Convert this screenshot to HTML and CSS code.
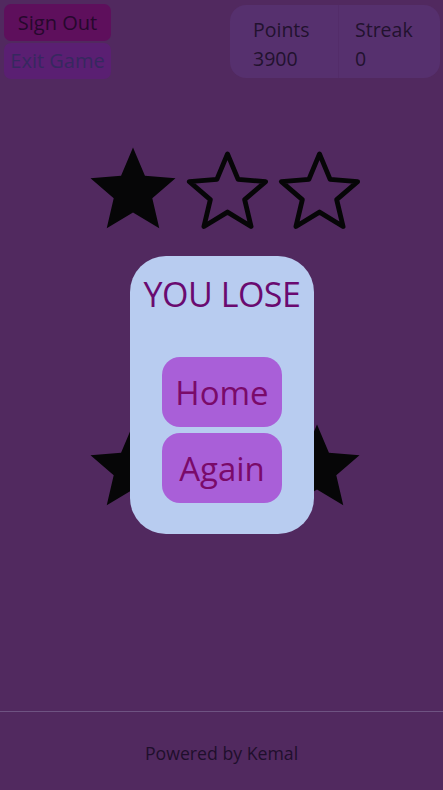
FILE: index.html
```html
<!DOCTYPE html>
<html>
<head>
<meta charset="utf-8">
<link rel="stylesheet" href="styles.css">
</head>
<body>
<div class="page">
  <header class="top">
    <div class="nav">
      <button class="btn signout">Sign Out</button>
      <button class="btn exit">Exit Game</button>
    </div>
    <div class="stats">
      <div class="stat">
        <div>Points</div>
        <div>3900</div>
      </div>
      <div class="stat">
        <div>Streak</div>
        <div>0</div>
      </div>
    </div>
  </header>
  <main class="game">
    <div class="stars row1">
      <svg class="star solid" viewBox="0 0 24 24"><path class="fill" d="M12 17.27L18.18 21l-1.64-7.03L22 9.24l-7.19-.61L12 2 9.19 8.630 2 9.24l5.46 4.73L5.82 21z"/></svg>
      <svg class="star hollow" viewBox="0 0 24 24"><path class="outline" d="M12 2.3 14.74 8.88 21.84 9.45 16.43 14.09 18.08 21.02 12 17.31 5.92 21.02 7.57 14.09 2.16 9.45 9.26 8.88z"/></svg>
      <svg class="star hollow" viewBox="0 0 24 24"><path class="outline" d="M12 2.3 14.74 8.88 21.84 9.45 16.43 14.09 18.08 21.02 12 17.31 5.92 21.02 7.57 14.09 2.16 9.45 9.26 8.88z"/></svg>
    </div>
    <div class="stars row2">
      <svg class="star solid" viewBox="0 0 24 24"><path class="fill" d="M12 17.27L18.18 21l-1.64-7.03L22 9.24l-7.19-.61L12 2 9.19 8.63 2 9.24l5.46 4.73L5.82 21z"/></svg>
      <svg class="star solid" viewBox="0 0 24 24"><path class="fill" d="M12 17.27L18.18 21l-1.64-7.03L22 9.24l-7.19-.61L12 2 9.19 8.63 2 9.24l5.46 4.73L5.82 21z"/></svg>
      <svg class="star solid" viewBox="0 0 24 24"><path class="fill" d="M12 17.27L18.18 21l-1.64-7.03L22 9.24l-7.19-.61L12 2 9.19 8.63 2 9.24l5.46 4.73L5.82 21z"/></svg>
    </div>
    <div class="modal">
      <h1 class="title">YOU LOSE</h1>
      <div class="actions">
        <button class="mbtn">Home</button>
        <button class="mbtn">Again</button>
      </div>
    </div>
  </main>
  <footer class="footer">Powered by Kemal</footer>
</div>
</body>
</html>
```
FILE: styles.css
```css
* { box-sizing: border-box; }
html, body { margin: 0; padding: 0; }
body {
  background: #51295f;
  font-family: "Open Sans", "Noto Sans", sans-serif;
  width: 443px;
  height: 790px;
  overflow: hidden;
}
.page {
  height: 790px;
  display: flex;
  flex-direction: column;
}
.top {
  display: flex;
  justify-content: space-between;
  align-items: flex-start;
  padding: 4px 3px 0 4px;
}
.nav {
  display: flex;
  flex-direction: column;
  gap: 2px;
}
.btn {
  width: 107px;
  height: 37px;
  border: none;
  border-radius: 7px;
  font-family: inherit;
  font-size: 20px;
  padding: 0;
  line-height: 37px;
}
.signout { background: #5e0f5c; color: #26082d; }
.exit { background: #5a1f72; color: #36285f; height: 36px; line-height: 36px; }
.stats {
  margin-top: 1px;
  width: 210px;
  height: 73px;
  background: #56306e;
  border-radius: 16px;
  display: flex;
}
.stat {
  flex: 1;
  padding: 10px 0 0 23px;
  font-size: 19.5px;
  line-height: 29px;
  color: #22122e;
}
.stat + .stat { border-left: 1px solid #532c69; padding-left: 16px; }
.game {
  position: relative;
  flex: 1;
}
.stars {
  display: flex;
  align-items: flex-start;
  padding-left: 82px;
}
.row1 { margin-top: 60px; }
.row2 { margin-top: 175px; }
.star { display: block; flex: none; }
.solid { width: 102px; height: 102px; }
.hollow { width: 93px; height: 93px; margin-top: 6px; }
.row1 .hollow:nth-child(2) { margin-left: -3px; }
.row1 .hollow:nth-child(3) { margin-left: -1px; }
.row2 .solid + .solid { margin-left: -10px; }
.fill { fill: #060607; }
.outline { fill: none; stroke: #060607; stroke-width: 1.25; stroke-linejoin: round; }
.modal {
  position: absolute;
  left: 130px;
  top: 177px;
  width: 184px;
  height: 278px;
  background: #b8ccf0;
  border-radius: 36px;
  display: flex;
  flex-direction: column;
  align-items: center;
}
.title {
  margin: 17px 0 0;
  font-weight: 400;
  font-size: 34px;
  line-height: 42px;
  color: #6a0a70;
  white-space: nowrap;
  letter-spacing: -0.5px;
}
.actions {
  margin-top: 42px;
  display: flex;
  flex-direction: column;
  gap: 6px;
}
.mbtn {
  width: 120px;
  height: 70px;
  border: none;
  border-radius: 18px;
  background: #a95fd8;
  color: #7a0a6a;
  font-family: inherit;
  font-size: 33px;
  padding: 0;
}
.footer {
  height: 79px;
  border-top: 1px solid #6e5382;
  text-align: center;
  font-size: 17.7px;
  color: #1f0f2c;
  padding-top: 29px;
}
```
